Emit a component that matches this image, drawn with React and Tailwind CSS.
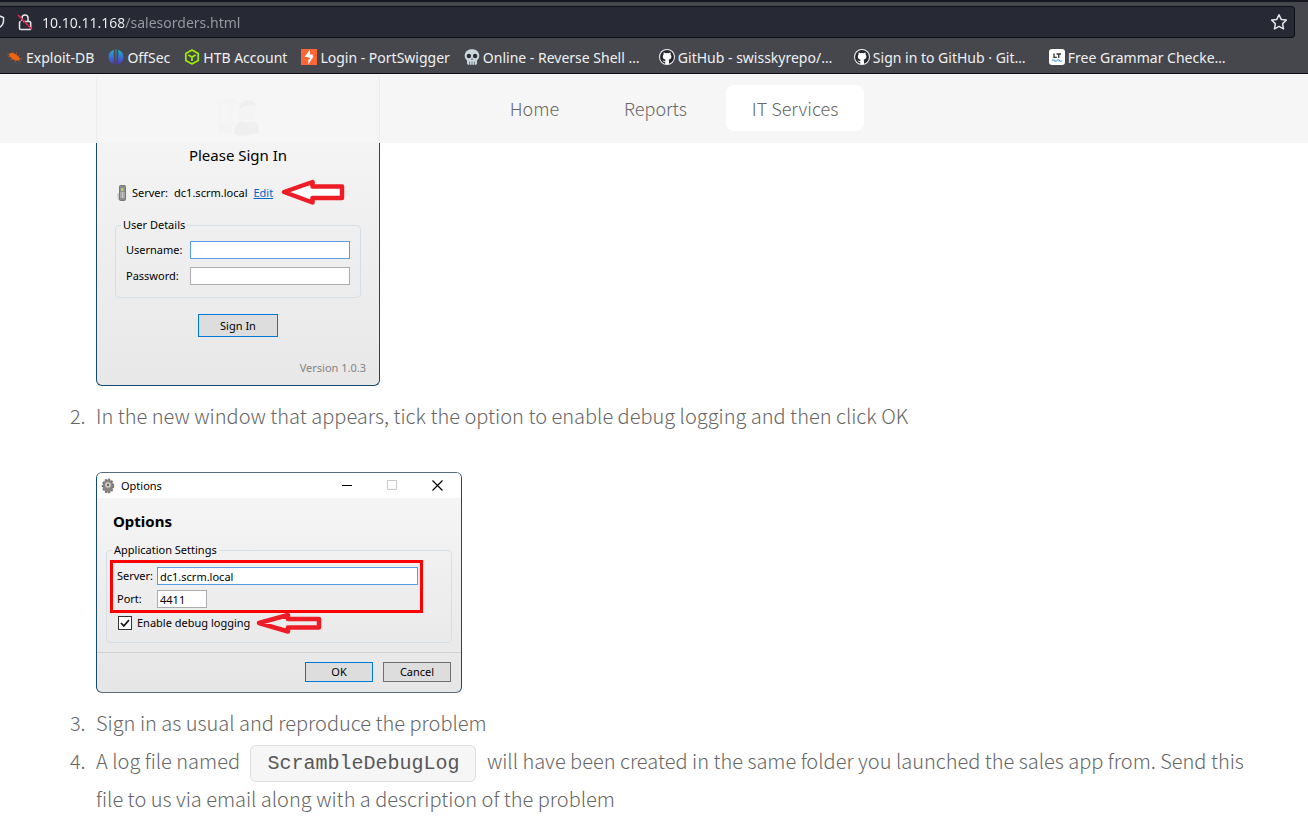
function LockOff() {
  return (
    <svg width="16" height="18" viewBox="0 0 16 18" fill="none" stroke="#e6e6ea" strokeWidth="1.5" aria-hidden="true">
      <path d="M5 8V5a3 3 0 0 1 6 0v3" />
      <path d="M6 8.5h6.5a1.2 1.2 0 0 1 1.2 1.2v5.600a1.200 1.200 0 0 1-1.200 1.200H3.700a1.200 1.200 0 0 1-1.200-1.200V9.700a1.200 1.200 0 0 1 1.200-1.200" />
      <path d="M1 2l14 14.500" stroke="#e2274f" strokeWidth="1.600" />
    </svg>
  );
}

function ShieldEdge() {
  return (
    <svg width="5" height="16" viewBox="11 0 5 16" fill="none" stroke="#e6e6ea" strokeWidth="1.500" aria-hidden="true">
      <path d="M8 1l6.500 2.500V7c0 3.500-2.500 6-6.500 8" />
    </svg>
  );
}

function Star() {
  return (
    <svg width="18" height="18" viewBox="0 0 18 18" fill="none" stroke="#e6e6ea" strokeWidth="1.500" strokeLinejoin="round" aria-hidden="true">
      <path d="M9 1.700l2.200 4.700 5.100.7-3.700 3.600.9 5.200L9 13.400l-4.500 2.500.9-5.200L1.700 7.100l5.100-.7z" />
    </svg>
  );
}

function ExploitIcon() {
  return (
    <svg width="16" height="16" viewBox="0 0 16 16" aria-hidden="true">
      <path d="M2 5c2-1.500 4.500-1.200 6.500.2 2.500 1.600 4.300 3.600 4.300 5.300-1.600 1.600-4.800 1.200-7-.3C3.500 8.700 2 6.800 2 5z" fill="#ee6411" />
      <path d="M.3 5.200h3M.8 8.200l3-1M3.500 11l2.500-1.500M5 2.800l1.500 2.700M9.500 3.500L9 6.500M12.500 6l-1.500 2M11 10l4-.5M11 11l2.500 2M8 11.500l.8 2" stroke="#ee6411" strokeWidth=".6" fill="none" />
    </svg>
  );
}

function OffSecIcon() {
  return (
    <svg width="16" height="16" viewBox="0 0 16 16" aria-hidden="true">
      <defs>
        <linearGradient id="offsec" x1="0" y1="0" x2="0" y2="1">
          <stop offset="0" stopColor="#1fb3c4" />
          <stop offset=".5" stopColor="#3a72d0" />
          <stop offset="1" stopColor="#5a2fd0" />
        </linearGradient>
      </defs>
      <path d="M5.800.8v14.400C2.500 14 .5 11.300.5 8s2-6 5.300-7.200zM7.500.3h1v15.400h-1zM10.200.8c3.300 1.200 5.300 3.900 5.300 7.200s-2 6-5.300 7.200z" fill="url(#offsec)" />
    </svg>
  );
}

function CubeIcon() {
  return (
    <svg width="16" height="16" viewBox="0 0 16 16" fill="none" stroke="#9fef00" strokeWidth="1.700" strokeLinejoin="round" aria-hidden="true">
      <path d="M8 1l6.200 3.400v7.200L8 15l-6.200-3.400V4.400z" />
      <path d="M4.300 6L8 8l3.700-2M8 8v4" />
    </svg>
  );
}

function BoltIcon() {
  return (
    <svg width="16" height="16" viewBox="0 0 16 16" aria-hidden="true">
      <path d="M0 0h16v16H0z" fill="#ff6633" />
      <path d="M9 .5v5h3.500L9.300 9.800l-2-1.900H3.500zM7.300 15.500v-4.800l2-.9-3-2.400 3-1.200 3.200 1.300z" fill="#fff" />
    </svg>
  );
}

function SkullIcon() {
  return (
    <svg width="16" height="16" viewBox="0 0 16 16" aria-hidden="true">
      <path d="M8 .3c4.300 0 7.300 2.700 7.300 6.500 0 2.300-1 3.600-2.300 4.400v3.100c0 1-.8 1.500-1.600 1.500H4.600c-.9 0-1.600-.6-1.600-1.500v-3.100C1.700 10.400.7 9.100.7 6.800.7 3 3.700.3 8 .3z" fill="#ccd6dd" />
      <circle cx="4.900" cy="7" r="2.200" fill="#292f33" />
      <circle cx="11.100" cy="7" r="2.200" fill="#292f33" />
      <path d="M8 8.800l1.200 2H6.800z" fill="#66757f" />
      <path d="M5.500 12.500V16M8 12.500V16M10.500 12.500V16" stroke="#66757f" strokeWidth=".9" />
    </svg>
  );
}

function GitHubIcon() {
  return (
    <svg width="16" height="16" viewBox="0 0 16 16" aria-hidden="true">
      <circle cx="8" cy="8" r="8" fill="#f4f4f5" />
      <circle cx="8" cy="8" r="7" fill="#24292e" />
      <path d="M6.200 15v-2.300c-1.700.3-2.200-.6-2.700-1.300.9-.2 1.200.9 2.700.5 0-.5.200-.8.500-1.100-1.800-.3-2.900-1.200-2.900-3.200 0-.9.300-1.500.8-2.100-.2-.8-.1-1.400.1-2 .8 0 1.400.4 1.900.8a6 6 0 0 1 3 0c.5-.4 1.100-.8 1.900-.8.2.6.3 1.200.1 2 .5.600.8 1.200.8 2.100 0 2-1.100 2.900-2.900 3.200.3.300.5.800.5 1.400V15z" fill="#fff" />
    </svg>
  );
}

function LanguageToolIcon() {
  return (
    <svg width="16" height="16" viewBox="0 0 16 16" fill="none" aria-hidden="true">
      <rect width="16" height="16" rx="3" fill="#fff" />
      <path d="M5 4.500v3.800h2.800M7.500 5h4.500M9.800 5v4" stroke="#333" strokeWidth="1.300" />
      <path d="M3 11.500q1.200-1.500 2.500 0t2.500 0 2.500 0 2.500 0" stroke="#4aa3f0" strokeWidth="1.200" />
    </svg>
  );
}

const shortBookmarks = [
  { label: "Exploit-DB", Icon: ExploitIcon },
  { label: "OffSec", Icon: OffSecIcon },
  { label: "HTB Account", Icon: CubeIcon },
  { label: "Login - PortSwigger", Icon: BoltIcon },
];
const longBookmarks = [
  { label: "Online - Reverse Shell …", Icon: SkullIcon },
  { label: "GitHub - swisskyrepo/…", Icon: GitHubIcon },
  { label: "Sign in to GitHub · Git…", Icon: GitHubIcon },
  { label: "Free Grammar Checke…", Icon: LanguageToolIcon },
];

function Bookmark({ label, Icon, wide }) {
  return (
    <a href="#" className={wide ? "flex w-[181px] shrink-0 items-center gap-[3px]" : "flex shrink-0 items-center gap-[3px]"}>
      <Icon />
      <span className="whitespace-nowrap">{label}</span>
    </a>
  );
}

function BrowserBar() {
  return (
    <header className='border-t-2 border-b border-t-[#15191f] border-b-[#0c0d12] bg-[#45474d] pt-1 font-["Noto_Sans",sans-serif] text-[14px] font-normal text-[#f0f0f2]'>
      <div className="mr-[13px] flex h-8 items-center rounded-r border border-l-0 border-[#0e0f14] bg-[#272935] pr-[6px]">
        <ShieldEdge />
        <span className="ml-3"><LockOff /></span>
        <input
          aria-label="Address"
          defaultValue="10.10.11.168/salesorders.html"
          className="ml-[9px] min-w-0 flex-1 bg-linear-to-r from-[#f4f4f6] from-[82px] to-[#9a9ba2] to-[82px] bg-clip-text text-transparent caret-white outline-none"
        />
        <button type="button" aria-label="Bookmark this page"><Star /></button>
      </div>
      <nav aria-label="Bookmarks" className="flex h-[35px] items-center gap-[14px] overflow-hidden pb-px pl-[7px] pt-1">
        {shortBookmarks.map((b) => <Bookmark key={b.label} {...b} />)}
        {longBookmarks.map((b) => <Bookmark key={b.label} {...b} wide />)}
      </nav>
    </header>
  );
}

function SiteNav() {
  return (
    <nav aria-label="Site" className="sticky top-0 z-10 -mb-[69px] flex h-[69px] items-center justify-center gap-[13px] bg-[#f6f6f6]/95 pb-px pl-10 text-[18px]">
      <a href="#" className="flex h-[46px] items-center rounded-lg px-[26px]">Home</a>
      <a href="#" className="flex h-[46px] items-center rounded-lg px-[26px]">Reports</a>
      <a href="#" className="flex h-[46px] items-center rounded-lg bg-white px-[26px]">IT Services</a>
    </nav>
  );
}

function ServerArrow() {
  return (
    <svg width="64" height="28" viewBox="0 0 64 28" className="-my-2 shrink-0" aria-hidden="true">
      <path d="M3 13L31.500 3v4.500H61v11.500H31.500v4.500z" fill="#fff" stroke="#ee1c24" strokeWidth="4.500" strokeLinejoin="round" />
    </svg>
  );
}

function LoggingArrow() {
  return (
    <svg width="66" height="22" viewBox="0 0 66 22" className="-my-2 shrink-0" aria-hidden="true">
      <path d="M3 11L32 3v4h31v8.500H32v4z" fill="#ececec" stroke="#ee1c24" strokeWidth="4.500" strokeLinejoin="round" />
    </svg>
  );
}

function ServerIcon() {
  return (
    <svg width="10" height="16" viewBox="0 0 10 16" aria-hidden="true">
      <path d="M0 9l3-2v8H1z" fill="#c9c9c9" />
      <rect x="2.500" y=".5" width="6" height="15" rx="1" fill="#8c8c8c" stroke="#777" />
      <path d="M4 3h2.500v3H4z" fill="#a9d85e" />
      <path d="M3.500 8h4M3.500 10h4M3.500 12h4" stroke="#fff" strokeDasharray="1 .5" />
    </svg>
  );
}

function UserPicture() {
  return (
    <svg width="42" height="42" viewBox="0 0 42 42" className="mx-auto" aria-hidden="true">
      <path d="M1 8h23v24H1z" fill="#d9d9d9" />
      <path d="M4 11h8v18H4zM14 11h8v18h-8z" fill="#eee" />
      <path d="M8 4h10l3 4H5zM16 0l8 6" fill="#ccc" />
      <path d="M1 30l12-2 2 11H2z" fill="#bccbd8" />
      <path d="M17 40c0-8 4-12 8-13l6 2 6-2c4 2 5 8 5 11-6 4-18 5-25 2z" fill="#777" />
      <ellipse cx="31" cy="17" rx="8" ry="11" fill="#e3d8d0" />
      <path d="M23 16c-2-12 15-13 17-3-5-3-11-2-14 0z" fill="#777" />
    </svg>
  );
}

const dialogFont = 'font-["Noto_Sans",sans-serif] text-[11px] leading-4 font-normal text-black';

function SignInWindow() {
  return (
    <form className={`${dialogFont} mb-[11px] w-[284px] rounded-md border border-t-0 border-[#124b6f] bg-linear-to-b from-[#f7f7f7] to-[#e8e8e8] pt-5 pb-[9px]`}>
      <UserPicture />
      <h2 className="mt-[7px] text-center text-[15px] leading-6">Please Sign In</h2>
      <div className="mt-[18px] flex items-center pl-5">
        <ServerIcon />
        <span className="ml-[5px]">Server:</span>
        <span className="ml-[6px]">dc1.scrm.local</span>
        <a href="#" className="mr-2 ml-[6px] text-[#0066cc] underline">Edit</a>
        <ServerArrow />
      </div>
      <fieldset className="mx-[18px] mt-4 rounded-sm border border-[#d5dfe8] pr-[10px] pb-3 pl-[10px]">
        <legend className="-ml-[5px] px-[2px]">User Details</legend>
        <div className="grid grid-cols-[56px_1fr] items-center gap-x-2 gap-y-2 pt-2">
          <label htmlFor="username">Username:</label>
          <input id="username" className="h-[18px] w-full min-w-0 border border-[#569de5] bg-white px-1" />
          <label htmlFor="password">Password:</label>
          <input id="password" type="password" className="h-[18px] w-full min-w-0 border border-[#abadb3] bg-white px-1" />
        </div>
      </fieldset>
      <button type="button" className="mx-auto mt-4 block h-[23px] w-20 border border-[#0078d7] bg-[#dddddd]">Sign In</button>
      <p className="mt-[23px] pr-[13px] text-right text-[#838383]">Version 1.0.3</p>
    </form>
  );
}

function GearIcon() {
  return (
    <svg width="14" height="16" viewBox="0 0 14 16" aria-hidden="true">
      <ellipse cx="7" cy="8" rx="5.300" ry="6.500" fill="#8b8583" stroke="#77716f" strokeWidth="1.800" strokeDasharray="2 1.400" />
      <ellipse cx="7" cy="8" rx="4.500" ry="5.500" fill="#8b8583" />
      <circle cx="7" cy="7" r="2.800" fill="#d2cfcd" />
      <circle cx="7" cy="7" r="1.200" fill="#6b6664" />
    </svg>
  );
}

function OptionsWindow() {
  return (
    <form className={`${dialogFont} mt-[37px] mb-[11px] w-[366px] overflow-hidden rounded-md border border-x-[#124b6f] border-y-[#566a78] bg-linear-to-b from-[#f7f7f7] to-[#e6e6e6]`}>
      <div className="flex h-[25px] items-center bg-white pr-px pl-1">
        <GearIcon />
        <span className="ml-[6px] flex-1">Options</span>
        <button type="button" aria-label="Minimise" className="flex w-[45px] justify-center">
          <svg width="11" height="11" viewBox="0 0 11 11" aria-hidden="true"><path d="M0 5.500h10" stroke="#000" /></svg>
        </button>
        <button type="button" aria-label="Maximise" disabled className="flex w-[45px] justify-center">
          <svg width="11" height="11" viewBox="0 0 11 11" aria-hidden="true"><path d="M.5.500h9v9h-9z" stroke="#c8c8c8" fill="none" /></svg>
        </button>
        <button type="button" aria-label="Close" className="flex w-[45px] justify-center">
          <svg width="11" height="11" viewBox="0 0 11 11" aria-hidden="true"><path d="M.5.500l10 10M10.500.500l-10 10" stroke="#000" strokeWidth="1.200" /></svg>
        </button>
      </div>
      <h2 className="pt-[11px] pl-4 text-[15px] leading-6 font-bold">Options</h2>
      <fieldset className="mx-[9px] mt-[9px] rounded-sm border border-[#d5dfe8] px-[3px] pb-[11px]">
        <legend className="ml-[2px] px-[2px]">Application Settings</legend>
        <div className="mt-[2px] mr-[25px] grid grid-cols-[36px_1fr] items-center gap-x-1 gap-y-[5px] border-[3px] border-[#fe0000] pt-1 pr-[2px] pb-[2px] pl-1">
          <label htmlFor="server">Server:</label>
          <input id="server" defaultValue="dc1.scrm.local" className="h-[18px] w-full min-w-0 border border-[#569de5] bg-white px-[2px]" />
          <label htmlFor="port">Port:</label>
          <input id="port" defaultValue="4411" className="h-[18px] w-[50px] border border-[#abadb3] bg-white px-[2px]" />
        </div>
        <div className="mt-[2px] flex items-center pl-2">
          <label className="flex items-center gap-[5px]">
            <span className="grid">
              <input type="checkbox" defaultChecked className="peer col-start-1 row-start-1 size-[14px] appearance-none border border-[#333] bg-white" />
              <svg width="14" height="14" viewBox="0 0 14 14" className="pointer-events-none invisible col-start-1 row-start-1 peer-checked:visible" aria-hidden="true">
                <path d="M3 7l2.800 3L11 4" fill="none" stroke="#111" strokeWidth="1.800" />
              </svg>
            </span>
            Enable debug logging
          </label>
          <span className="ml-[6px] flex"><LoggingArrow /></span>
        </div>
      </fieldset>
      <div className="mt-[9px] flex justify-end gap-[10px] border-t border-[#d0d0d0] pt-[9px] pr-[10px] pb-[10px]">
        <button type="button" className="h-5 w-[68px] border border-[#0078d7] bg-[#dddddd]">OK</button>
        <button type="button" className="h-5 w-[68px] border border-[#707070] bg-[#dddddd]">Cancel</button>
      </div>
    </form>
  );
}

export default function App() {
  return (
    <div className='min-h-screen bg-white font-["Noto_Sans_CJK_SC",sans-serif] font-light text-[#666666]'>
      <BrowserBar />
      <SiteNav />
      <main className="pr-12 pl-[90px]">
        <ol className="list-decimal text-[20px] leading-[38px]">
          <li className="list-none pl-[6px]"><SignInWindow /></li>
          <li className="pl-[6px]">
            In the new window that appears, tick the option to enable debug logging and then click OK
            <OptionsWindow />
          </li>
          <li className="pl-[6px]">Sign in as usual and reproduce the problem</li>
          <li className="pl-[6px]">
            A log file named{" "}
            <code className='mx-[6px] rounded-md border border-[#dedede] bg-[#f6f6f6] px-4 py-[6px] font-["Liberation_Mono",monospace] text-[20px] leading-5 font-normal text-[#585858]'>ScrambleDebugLog</code>{" "}
            will have been created in the same folder you launched the sales app from. Send this file to us via email along with a description of the problem
          </li>
        </ol>
      </main>
    </div>
  );
}
